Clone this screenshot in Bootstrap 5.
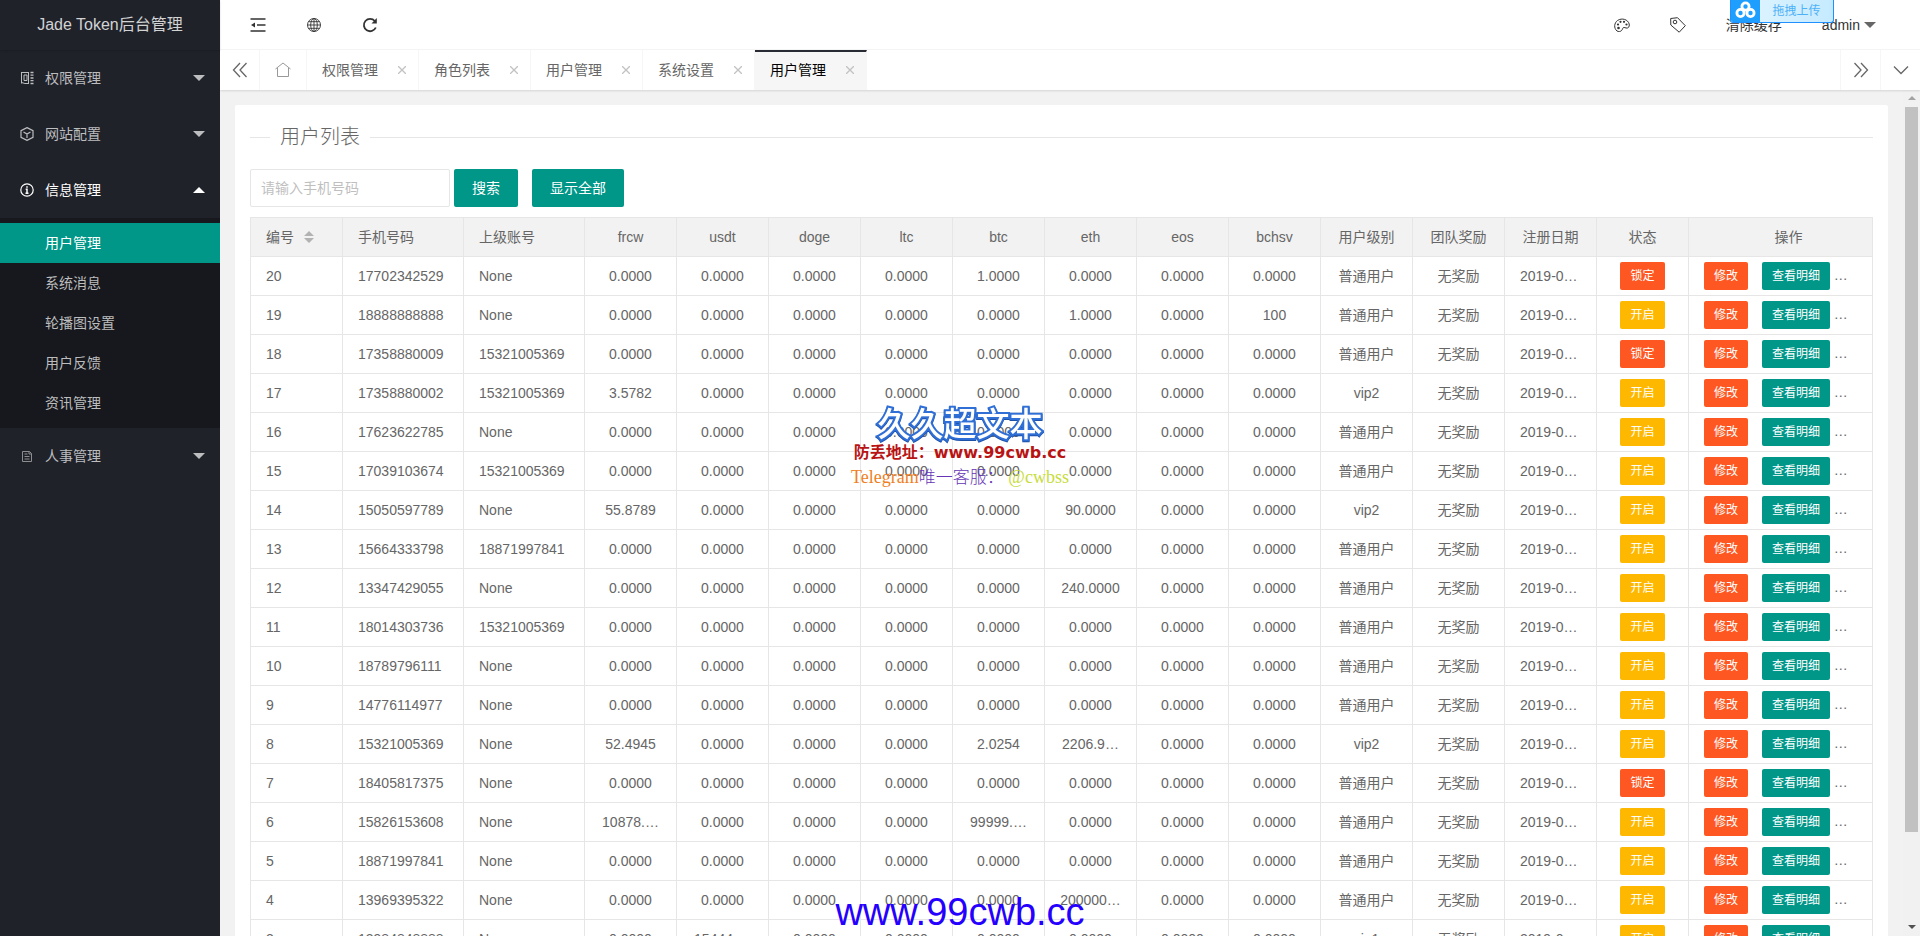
<!DOCTYPE html>
<html lang="zh-CN">
<head>
<meta charset="utf-8">
<meta name="viewport" content="width=device-width, initial-scale=1">
<title>Jade Token后台管理</title>
<link href="https://cdn.jsdelivr.net/npm/bootstrap@5.3.0/dist/css/bootstrap.min.css" rel="stylesheet">
<style>
:root { --teal: #009688; --red: #ff5722; --amber: #ffb800; --line: #e6e6e6; }
body { font: 14px/24px "Liberation Sans", "Noto Sans CJK SC", sans-serif; color: #666; background: #f2f2f2; }
a { color: inherit; text-decoration: none; }
svg { fill: none; stroke: currentColor; display: block; }
.caret { border: 6px solid transparent; border-top-color: currentColor; border-bottom-width: 0; }
.caret-up { transform: rotate(180deg); }

/* sidebar */
.side { width: 220px; background: #20222a; color: #bcbdbf; z-index: 3; }
.side-logo { height: 50px; font-size: 16px; color: #d2d3d4; box-shadow: 0 1px 2px rgba(0,0,0,.15); }
.side-item { height: 56px; padding: 0 15px 0 20px; }
.side-item svg { width: 14px; height: 14px; margin-right: 11px; }
.side-item.open { color: #fff; }
.side-sub { background: #17181d; padding: 5px 0; }
.side-sub a { display: block; line-height: 40px; padding-left: 45px; }
.side-sub a.active { background: var(--teal); color: #fff; }

/* top bar and tab strip */
.topbar { height: 50px; background: #fff; border-bottom: 1px solid #f6f6f6; color: #333; }
.topbar > div > a { padding: 0 20px; }
.topbar-left { padding-left: 10px; }
.topbar .caret { color: #666; }
.tabstrip { height: 40px; background: #fff; box-shadow: 0 1px 2px rgba(0,0,0,.12); z-index: 2; }
.tab-ctl { width: 40px; border-right: 1px solid #f6f6f6; }
.tab-home { width: 47px; border-right: 1px solid #f6f6f6; color: #999; }
.tab-page { width: 112px; padding: 0 12px 0 15px; border-right: 1px solid #f6f6f6; }
.tab-page button { border: 0; background: none; padding: 0; color: #c2c2c2; }
.tab-page.active { background: #f6f6f6; color: #000; border-top: 2px solid #292b34; }
.tab-page.active > * { margin-top: -2px; }
.tab-end { border-right: 0; border-left: 1px solid #f6f6f6; }

/* page */
.panel-box { background: #fff; border-radius: 2px; margin: 15px 15px 0; padding: 15px 15px 0; }
.list-title { font-size: 20px; font-weight: 300; line-height: 34px; margin-bottom: 15px; gap: 10px; }
.list-title::before, .list-title::after { content: ""; height: 1px; background: var(--line); }
.list-title::before { width: 20px; }
.list-title::after { flex: 1; }
.search-row { margin-bottom: 10px; }
.phone-box { width: 200px; height: 38px; border: 1px solid var(--line); border-radius: 2px; padding: 0 10px; font-size: 14px; }
.phone-box::placeholder { color: #bfbfbf; }
.btn-teal, .btn-red, .btn-amber { --bs-btn-color: #fff; --bs-btn-hover-color: #fff; border: 0; border-radius: 2px; white-space: nowrap; }
.btn-teal { background: var(--teal); }
.btn-red { background: var(--red); }
.btn-amber { background: var(--amber); }
.btn-tall { height: 38px; padding: 0 18px; font-size: 14px; }
.btn-tall + .btn-tall { margin-left: 14px; }
.btn-low { height: 28px; line-height: 28px; padding: 0 10px; font-size: 12px; vertical-align: middle; }
.btn-low + .btn-low { margin-left: 10px; }
.user-table { table-layout: fixed; width: 100%; border-collapse: separate; border-spacing: 0; border: solid var(--line); border-width: 1px 0 0 1px; }
.user-table th, .user-table td { height: 39px; padding: 0 4px; border: solid var(--line); border-width: 0 1px 1px 0; font-weight: 400; text-align: center; white-space: nowrap; overflow: hidden; }
.user-table th { background: #f2f2f2; }
.user-table tr > :nth-child(-n+3) { text-align: left; padding-left: 15px; }
.user-table td:last-child { text-align: left; padding-left: 15px; }
.user-table th:last-child { padding-left: 20px; }
.user-table .date-col { text-align: left; padding-left: 15px; }
.c-phone { width: 121px; }
.c-ops { width: 184px; }
.rail { width: 17px; background: #f1f1f1; padding: 6px 2px 7px; color: #505050; }
.rail i { border: 4px solid transparent; border-bottom-color: #a3a3a3; border-top: 0; }
.rail i:last-child { border-top: 4px solid #505050; border-bottom: 0; }
.rail-thumb { width: 13px; height: 87%; background: #c1c1c1; margin: 7px 0 auto; }

/* floating marks */
.mark-mid, .mark-foot { left: 0; right: 0; z-index: 5; pointer-events: none; text-align: center; white-space: nowrap; }
.mark-mid { top: 402px; }
.mark-brand { font: 500 33px/40px "Noto Sans CJK SC", sans-serif; color: #fff; -webkit-text-stroke: 4px #2f6fd6; paint-order: stroke fill; filter: drop-shadow(0 1px 0 #1c51a8); }
.mark-site { font: bold 16px/22px "DejaVu Sans", "Noto Sans CJK SC", sans-serif; color: #b81414; }
.mark-chat { font: 18px/26px "Liberation Serif", "Noto Sans CJK SC", serif; color: #ef7f1f; }
.mark-chat span { font-size: 17px; font-weight: 300; color: #6535b5; }
.mark-chat b { font-weight: 400; color: #c8dc3c; }
.mark-foot { bottom: 2px; font: 38px/44px "Liberation Sans", sans-serif; color: #2600ff; }
.drop-box { top: 0; right: 86px; width: 104px; height: 23px; z-index: 6; border: 1px solid #1e90ff; border-top: 0; border-radius: 0 0 3px 3px; background: linear-gradient(90deg, #e3f6ff, #c5eaff); color: #4db1f7; font-size: 12px; overflow: hidden; }
.drop-box svg { width: 29px; height: 22px; background: #1e9fff; color: #fff; }
</style>
</head>
<body class="vh-100 overflow-hidden d-flex">

<aside class="side flex-shrink-0">
  <a href="#" class="side-logo d-flex align-items-center justify-content-center">Jade Token后台管理</a>
  <nav>
    <a href="#" class="side-item d-flex align-items-center">
      <svg viewBox="0 0 14 14"><path d="M1.500 1v11.500M1 1.500h4M1.500 11.500L5 12.500M4 4h3v5.500H4zM8.500 1v12M5 1.500h3.500M5 12.500h3.500"/><path d="M10.500 1.500h3M10.500 4.200h3M10.500 7h3M10.500 9.700h3M10.500 12.500h3" stroke-width="1.300"/></svg>
      <span class="me-auto">权限管理</span><i class="caret"></i></a>
    <a href="#" class="side-item d-flex align-items-center">
      <svg viewBox="0 0 14 14" stroke-width="1.200"><path d="M7 .6l6 3v6.800l-6 3-6-3V3.600zM3.500 5L7 7l3.500-2M7 7v4"/></svg>
      <span class="me-auto">网站配置</span><i class="caret"></i></a>
    <a href="#" class="side-item open d-flex align-items-center">
      <svg viewBox="0 0 14 14" stroke-width="1.200"><circle cx="7" cy="7" r="6.200"/><path d="M7 3.200v1.500M5.700 6.200H7v4M5.500 10.200h3" stroke-width="1.500"/></svg>
      <span class="me-auto">信息管理</span><i class="caret caret-up"></i></a>
    <div class="side-sub">
      <a href="#" class="active">用户管理</a>
      <a href="#">系统消息</a>
      <a href="#">轮播图设置</a>
      <a href="#">用户反馈</a>
      <a href="#">资讯管理</a>
    </div>
    <a href="#" class="side-item d-flex align-items-center">
      <svg viewBox="0 0 14 14" opacity=".7"><path d="M2.500 2.500h7l2 2v8h-9zM9 2.500V5h2.500M4.500 5h3M4.500 7.500h5M4.500 10h5"/></svg>
      <span class="me-auto">人事管理</span><i class="caret"></i></a>
  </nav>
</aside>

<div class="flex-grow-1 d-flex flex-column overflow-hidden">
  <header class="topbar flex-shrink-0 d-flex justify-content-between">
    <div class="topbar-left d-flex align-items-center">
      <a href="#" aria-label="收起菜单"><svg width="16" height="16" viewBox="0 0 16 16" stroke-width="1.500"><path d="M.5 2h15M7 8h8.500M.5 14h15"/><path d="M1 8l4-2.500v5z" fill="currentColor" stroke="none"/></svg></a>
      <a href="#" aria-label="网站"><svg width="16" height="16" viewBox="0 0 16 16" stroke-width=".9"><circle cx="8" cy="8" r="6.500"/><ellipse cx="8" cy="8" rx="3.300" ry="6.500"/><path d="M8 1.500v13M1.500 8h13M2.500 4.700h11M2.500 11.300h11"/></svg></a>
      <a href="#" aria-label="刷新"><svg width="16" height="16" viewBox="0 0 16 16" stroke-width="1.800"><path d="M13.800 10.500A6.200 6.200 0 1 1 12.800 4"/><path d="M14.800 1v5.500H9.500z" fill="currentColor" stroke="none"/></svg></a>
    </div>
    <div class="d-flex align-items-center pe-4">
      <a href="#" aria-label="主题"><svg width="16" height="16" viewBox="0 0 16 16"><path d="M3 14C-.5 11 .2 6 3.500 3.500 8 .5 14 2.500 15.200 7c.6 3-1.200 4.500-3.200 4-1.500-.5-2.700-1-3.200.3-.5 1.500-1.300 3-3.300 3.200-1 0-1.800 0-2.500-.5z"/><g fill="currentColor" stroke="none"><circle cx="4" cy="7.500" r="1.100"/><circle cx="6.500" cy="4.800" r="1.100"/><circle cx="10" cy="4.800" r="1.100"/><circle cx="12.500" cy="7.500" r="1.100"/><circle cx="4.500" cy="11" r="1.300"/></g></svg></a>
      <a href="#" aria-label="便签"><svg width="16" height="16" viewBox="0 0 16 16"><path d="M.7 1.500L7.500.7l7.800 8-6.100 6.500L.8 8z"/><circle cx="5" cy="5" r="1.800"/></svg></a>
      <a href="#">清除缓存</a>
      <a href="#" class="d-flex align-items-center gap-1">admin <i class="caret"></i></a>
    </div>
  </header>

  <div class="tabstrip flex-shrink-0 d-flex position-relative">
    <a href="#" class="tab-ctl d-flex align-items-center justify-content-center" aria-label="向左"><svg width="16" height="16" viewBox="0 0 16 16" stroke-width="1.300"><path d="M8 1L1.500 8 8 15M14.500 1L8 8l6.500 7"/></svg></a>
    <a href="#" class="tab-home d-flex align-items-center justify-content-center" aria-label="首页"><svg width="16" height="16" viewBox="0 0 16 16"><path d="M.5 7L8 1l7.500 6M2.500 6v8.500h11V6"/></svg></a>
    <div class="tab-page d-flex align-items-center justify-content-between"><a href="#">权限管理</a><button type="button" aria-label="关闭"><svg width="8" height="8" viewBox="0 0 8 8" stroke-width="1.300"><path d="M0 0l8 8M8 0L0 8"/></svg></button></div>
    <div class="tab-page d-flex align-items-center justify-content-between"><a href="#">角色列表</a><button type="button" aria-label="关闭"><svg width="8" height="8" viewBox="0 0 8 8" stroke-width="1.300"><path d="M0 0l8 8M8 0L0 8"/></svg></button></div>
    <div class="tab-page d-flex align-items-center justify-content-between"><a href="#">用户管理</a><button type="button" aria-label="关闭"><svg width="8" height="8" viewBox="0 0 8 8" stroke-width="1.300"><path d="M0 0l8 8M8 0L0 8"/></svg></button></div>
    <div class="tab-page d-flex align-items-center justify-content-between"><a href="#">系统设置</a><button type="button" aria-label="关闭"><svg width="8" height="8" viewBox="0 0 8 8" stroke-width="1.300"><path d="M0 0l8 8M8 0L0 8"/></svg></button></div>
    <div class="tab-page active d-flex align-items-center justify-content-between"><a href="#">用户管理</a><button type="button" aria-label="关闭"><svg width="8" height="8" viewBox="0 0 8 8" stroke-width="1.300"><path d="M0 0l8 8M8 0L0 8"/></svg></button></div>
    <a href="#" class="tab-ctl tab-end ms-auto d-flex align-items-center justify-content-center" aria-label="向右"><svg width="16" height="16" viewBox="0 0 16 16" stroke-width="1.300"><path d="M1.500 1L8 8l-6.500 7M8 1l6.500 7L8 15"/></svg></a>
    <a href="#" class="tab-ctl tab-end d-flex align-items-center justify-content-center" aria-label="更多"><svg width="16" height="16" viewBox="0 0 16 16" stroke-width="1.300"><path d="M1 4.500l7 7 7-7"/></svg></a>
  </div>

  <div class="flex-grow-1 d-flex overflow-hidden">
    <main class="flex-grow-1 overflow-hidden">
      <div class="panel-box">
        <h1 class="list-title d-flex align-items-center">用户列表</h1>
        <form class="search-row d-flex">
          <input type="text" class="phone-box me-1" placeholder="请输入手机号码" aria-label="手机号码">
          <button type="button" class="btn btn-teal btn-tall">搜索</button>
          <button type="button" class="btn btn-teal btn-tall">显示全部</button>
        </form>
        <table class="user-table">
          <colgroup><col><col class="c-phone"><col class="c-phone"><col span="12"><col class="c-ops"></colgroup>
          <thead>
            <tr>
              <th><span class="d-flex align-items-center">编号<svg class="ms-2" width="14" height="14" viewBox="0 0 14 14"><path d="M2 6l5-5 5 5zM2 8l5 5 5-5z" fill="#b2b2b2" stroke="none"/></svg></span></th>
              <th>手机号码</th><th>上级账号</th><th>frcw</th><th>usdt</th><th>doge</th><th>ltc</th><th>btc</th><th>eth</th><th>eos</th><th>bchsv</th><th>用户级别</th><th>团队奖励</th><th>注册日期</th><th>状态</th><th>操作</th>
            </tr>
          </thead>
          <tbody id="users"></tbody>
        </table>
      </div>
    </main>
    <div class="rail flex-shrink-0 d-flex flex-column align-items-center" aria-hidden="true"><i></i><div class="rail-thumb"></div><i></i></div>
  </div>
</div>

<div class="drop-box position-absolute d-flex align-items-center">
  <svg viewBox="0 0 29 22" stroke-width="2.800"><circle cx="14.500" cy="6.500" r="3.600"/><circle cx="9.500" cy="13" r="3.600"/><circle cx="19.500" cy="13" r="3.600"/></svg>
  <span class="flex-grow-1 text-center">拖拽上传</span>
</div>
<div class="mark-mid position-absolute">
  <div class="mark-brand">久久超文本</div>
  <div class="mark-site">防丢地址：www.99cwb.cc</div>
  <div class="mark-chat">Telegram<span>唯一客服：</span> <b>@cwbss</b></div>
</div>
<div class="mark-foot position-absolute">www.99cwb.cc</div>

<script>
// id, phone, parent account, balances that are not zero, level, locked
const users = [
  [20, '17702342529', 'None', {btc: '1.0000'}, '', true],
  [19, '18888888888', 'None', {eth: '1.0000', bchsv: '100'}],
  [18, '17358880009', '15321005369', {}, '', true],
  [17, '17358880002', '15321005369', {frcw: '3.5782'}, 'vip2'],
  [16, '17623622785', 'None', {}],
  [15, '17039103674', '15321005369', {}],
  [14, '15050597789', 'None', {frcw: '55.8789', eth: '90.0000'}, 'vip2'],
  [13, '15664333798', '18871997841', {}],
  [12, '13347429055', 'None', {eth: '240.0000'}],
  [11, '18014303736', '15321005369', {}],
  [10, '18789796111', 'None', {}],
  [9, '14776114977', 'None', {}],
  [8, '15321005369', 'None', {frcw: '52.4945', btc: '2.0254', eth: '2206.9…'}, 'vip2'],
  [7, '18405817375', 'None', {}, '', true],
  [6, '15826153608', 'None', {frcw: '10878.…', btc: '99999.…'}],
  [5, '18871997841', 'None', {}],
  [4, '13969395322', 'None', {eth: '200000…'}],
  [3, '13984848888', 'None', {usdt: '15444.…'}, 'vip1']
];
const coins = ['frcw', 'usdt', 'doge', 'ltc', 'btc', 'eth', 'eos', 'bchsv'];
document.getElementById('users').innerHTML = users.map(([id, phone, parent, sums, level, locked]) => `<tr>
  <td>${id}</td><td>${phone}</td><td>${parent}</td>
  ${coins.map(c => `<td>${sums[c] || '0.0000'}</td>`).join('')}
  <td>${level || '普通用户'}</td><td>无奖励</td><td class="date-col">2019-0…</td>
  <td><button type="button" class="btn btn-low ${locked ? 'btn-red' : 'btn-amber'}">${locked ? '锁定' : '开启'}</button></td>
  <td><button type="button" class="btn btn-low btn-red">修改</button> <button type="button" class="btn btn-low btn-teal">查看明细</button> …</td></tr>`).join('');
</script>
<script src="https://cdn.jsdelivr.net/npm/bootstrap@5.3.0/dist/js/bootstrap.bundle.min.js"></script>
</body>
</html>
